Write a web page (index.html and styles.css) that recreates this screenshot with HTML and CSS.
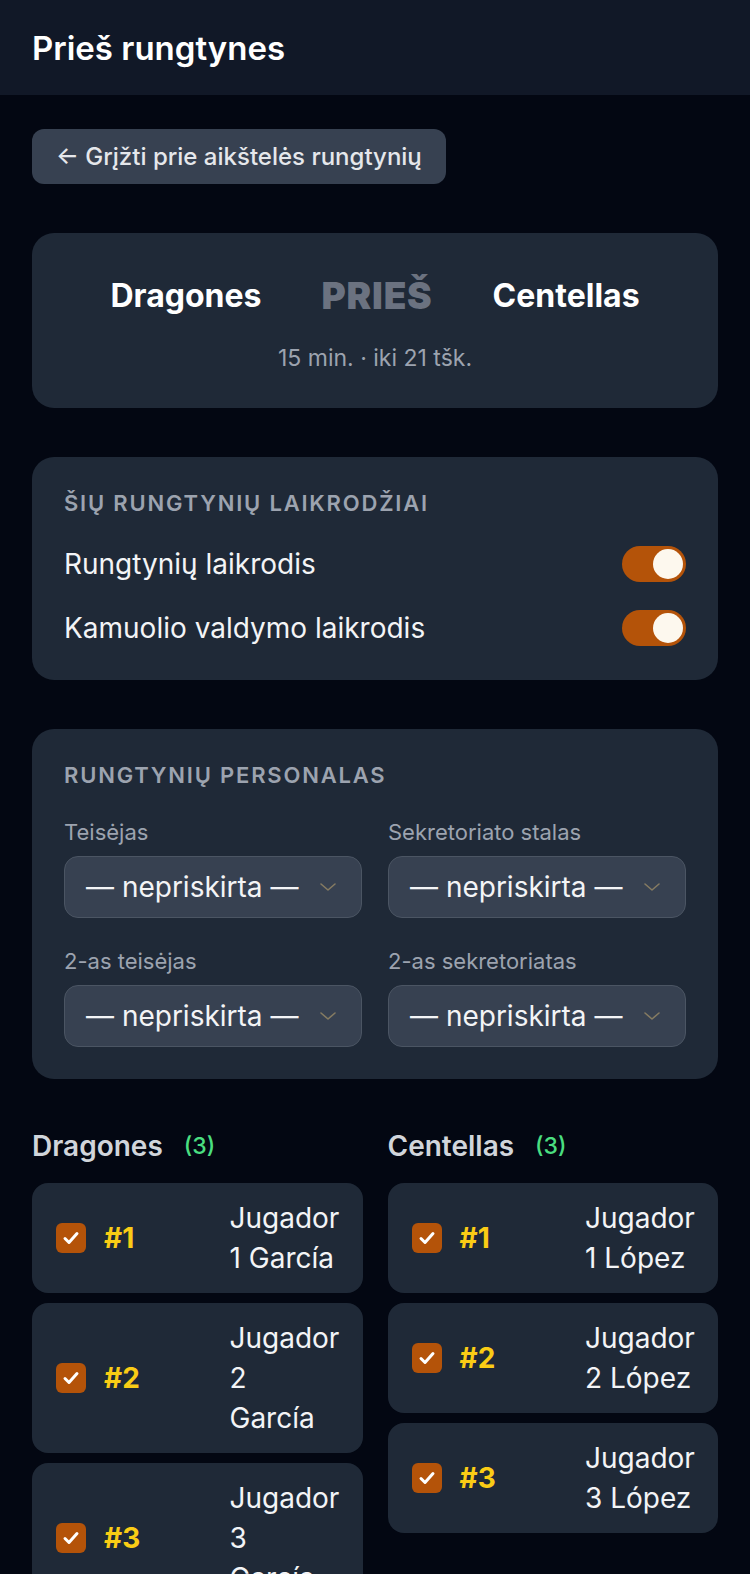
FILE: index.html
```html
<!DOCTYPE html>
<html lang="lt">
<head>
    <meta charset="UTF-8">
    <meta name="viewport" content="width=device-width, initial-scale=1.0">
    <title>Prieš rungtynes</title>
    <link rel="stylesheet" href="styles.css">
</head>
<body>
    <header class="topbar">
        <h1>Prieš rungtynes</h1>
    </header>

    <main class="page">
        <div class="back-btn">← Grįžti prie aikštelės rungtynių</div>

        <!-- Komandos -->
        <section class="card matchup">
            <div class="teams">
                <span class="team">Dragones</span>
                <span class="vs">PRIEŠ</span>
                <span class="team">Centellas</span>
            </div>
            <p class="meta">15 min. · iki 21 tšk.</p>
        </section>

        <!-- Laikrodžiai -->
        <section class="card">
            <h2 class="card-title">Šių rungtynių laikrodžiai</h2>
            <div class="toggle-row first">
                <span>Rungtynių laikrodis</span>
                <span class="toggle on"><span class="knob"></span></span>
            </div>
            <div class="toggle-row">
                <span>Kamuolio valdymo laikrodis</span>
                <span class="toggle on"><span class="knob"></span></span>
            </div>
        </section>

        <!-- Personalas -->
        <section class="card">
            <h2 class="card-title">Rungtynių personalas</h2>
            <div class="staff-grid">
                <div class="field">
                    <label>Teisėjas</label>
                    <div class="select"><span>— nepriskirta —</span><svg width="18" height="10" viewBox="0 0 18 10"><polyline points="2,2 9,8 16,2" fill="none" stroke="currentColor" stroke-width="1.6" stroke-linecap="round" stroke-linejoin="round"/></svg></div>
                </div>
                <div class="field">
                    <label>Sekretoriato stalas</label>
                    <div class="select"><span>— nepriskirta —</span><svg width="18" height="10" viewBox="0 0 18 10"><polyline points="2,2 9,8 16,2" fill="none" stroke="currentColor" stroke-width="1.6" stroke-linecap="round" stroke-linejoin="round"/></svg></div>
                </div>
                <div class="field">
                    <label>2-as teisėjas</label>
                    <div class="select"><span>— nepriskirta —</span><svg width="18" height="10" viewBox="0 0 18 10"><polyline points="2,2 9,8 16,2" fill="none" stroke="currentColor" stroke-width="1.6" stroke-linecap="round" stroke-linejoin="round"/></svg></div>
                </div>
                <div class="field">
                    <label>2-as sekretoriatas</label>
                    <div class="select"><span>— nepriskirta —</span><svg width="18" height="10" viewBox="0 0 18 10"><polyline points="2,2 9,8 16,2" fill="none" stroke="currentColor" stroke-width="1.6" stroke-linecap="round" stroke-linejoin="round"/></svg></div>
                </div>
            </div>
        </section>

        <!-- Žaidėjai -->
        <div class="rosters">
            <div class="roster" id="roster-home">
                <h3 class="roster-title">Dragones <span class="count">(3)</span></h3>
            </div>
            <div class="roster" id="roster-away">
                <h3 class="roster-title">Centellas <span class="count">(3)</span></h3>
            </div>
        </div>
    </main>

    <script>
        // Žaidėjų sąrašai
        const rosters = {
            'roster-home': ['Jugador 1 García', 'Jugador 2 García', 'Jugador 3 García'],
            'roster-away': ['Jugador 1 López', 'Jugador 2 López', 'Jugador 3 López']
        };

        const checkSvg = '<svg width="30" height="30" viewBox="0 0 30 30"><polyline points="9,15.5 13,19.5 21,10.5" fill="none" stroke="white" stroke-width="3" stroke-linecap="round" stroke-linejoin="round"/></svg>';

        for (const id in rosters) {
            const box = document.getElementById(id);
            rosters[id].forEach((name, i) => {
                const row = document.createElement('div');
                row.className = 'player';
                row.innerHTML =
                    '<span class="check">' + checkSvg + '</span>' +
                    '<span class="num">#' + (i + 1) + '</span>' +
                    '<span class="name">' + name + '</span>';
                box.appendChild(row);
            });
        }
    </script>
</body>
</html>
```

FILE: styles.css
```css
body {
    font-family: Inter, "Noto Sans", sans-serif;
    margin: 0;
    padding: 0;
    background-color: #030712;
    color: #f3f4f6;
}

.topbar {
    background-color: #111827;
    height: 95px;
    display: flex;
    align-items: center;
    padding: 0 32px;
}

.topbar h1 {
    margin: 0;
    font-size: 33px;
    font-weight: 600;
    color: #ffffff;
}

.page {
    padding: 34px 32px 0;
}

.back-btn {
    display: inline-flex;
    align-items: center;
    height: 55px;
    padding: 0 24px;
    background-color: #374151;
    color: #e5e7eb;
    border-radius: 12px;
    font-size: 24px;
    font-weight: 500;
    box-sizing: border-box;
}

.card {
    background-color: #1f2937;
    border-radius: 22px;
    padding: 32px;
    margin-top: 49px;
}

.matchup {
    padding: 40px 24px 34px;
    text-align: center;
}

.teams {
    display: flex;
    justify-content: center;
    align-items: center;
    gap: 60px;
    height: 44px;
}

.team {
    font-size: 32px;
    font-weight: 700;
    color: #ffffff;
}

.vs {
    font-size: 37px;
    font-weight: 900;
    letter-spacing: 0.8px;
    color: #6b7280;
}

.meta {
    margin: 25px 0 0;
    font-size: 23px;
    line-height: 32px;
    color: #9ca3af;
}

.card-title {
    margin: 0;
    font-size: 22px;
    line-height: 28px;
    font-weight: 600;
    letter-spacing: 1.8px;
    text-transform: uppercase;
    color: #9ca3af;
}

.toggle-row {
    display: flex;
    justify-content: space-between;
    align-items: center;
    height: 40px;
    margin-top: 24px;
    font-size: 28px;
    color: #f3f4f6;
}

.toggle-row.first {
    margin-top: 27px;
}

.toggle {
    display: flex;
    align-items: center;
    justify-content: flex-end;
    width: 64px;
    height: 36px;
    padding: 3px;
    box-sizing: border-box;
    border-radius: 18px;
    background-color: #b45309;
}

.knob {
    width: 30px;
    height: 30px;
    border-radius: 50%;
    background-color: #fdf8ee;
}

.staff-grid {
    display: grid;
    grid-template-columns: 1fr 1fr;
    column-gap: 26px;
    row-gap: 29px;
    margin-top: 29px;
}

.field label {
    display: block;
    font-size: 22px;
    line-height: 28px;
    color: #9ca3af;
    margin-bottom: 10px;
}

.select {
    display: flex;
    align-items: center;
    justify-content: space-between;
    height: 62px;
    padding: 0 24px 0 21px;
    box-sizing: border-box;
    background-color: #374151;
    border: 1px solid #4b5563;
    border-radius: 14px;
    font-size: 28px;
    color: #f3f4f6;
}

.select svg {
    color: #857b62;
}

.rosters {
    display: grid;
    grid-template-columns: 1fr 1fr;
    column-gap: 25px;
    margin-top: 49px;
}

.roster-title {
    margin: 0 0 19px;
    height: 36px;
    display: flex;
    align-items: center;
    font-size: 28px;
    font-weight: 600;
    color: #d1d5db;
}

.count {
    margin-left: 21px;
    font-size: 23px;
    font-weight: 500;
    color: #4ade80;
}

.player {
    display: grid;
    grid-template-columns: 30px 1fr 107.5px;
    column-gap: 18px;
    align-items: center;
    background-color: #1f2937;
    border-radius: 16px;
    padding: 15px 25.5px 15px 24px;
    margin-bottom: 10px;
}

.check {
    display: flex;
    width: 30px;
    height: 30px;
    border-radius: 6px;
    background-color: #b45309;
}

.num {
    font-size: 28px;
    font-weight: 700;
    color: #facc15;
}

.name {
    font-size: 28px;
    line-height: 40px;
    color: #f3f4f6;
}
```
